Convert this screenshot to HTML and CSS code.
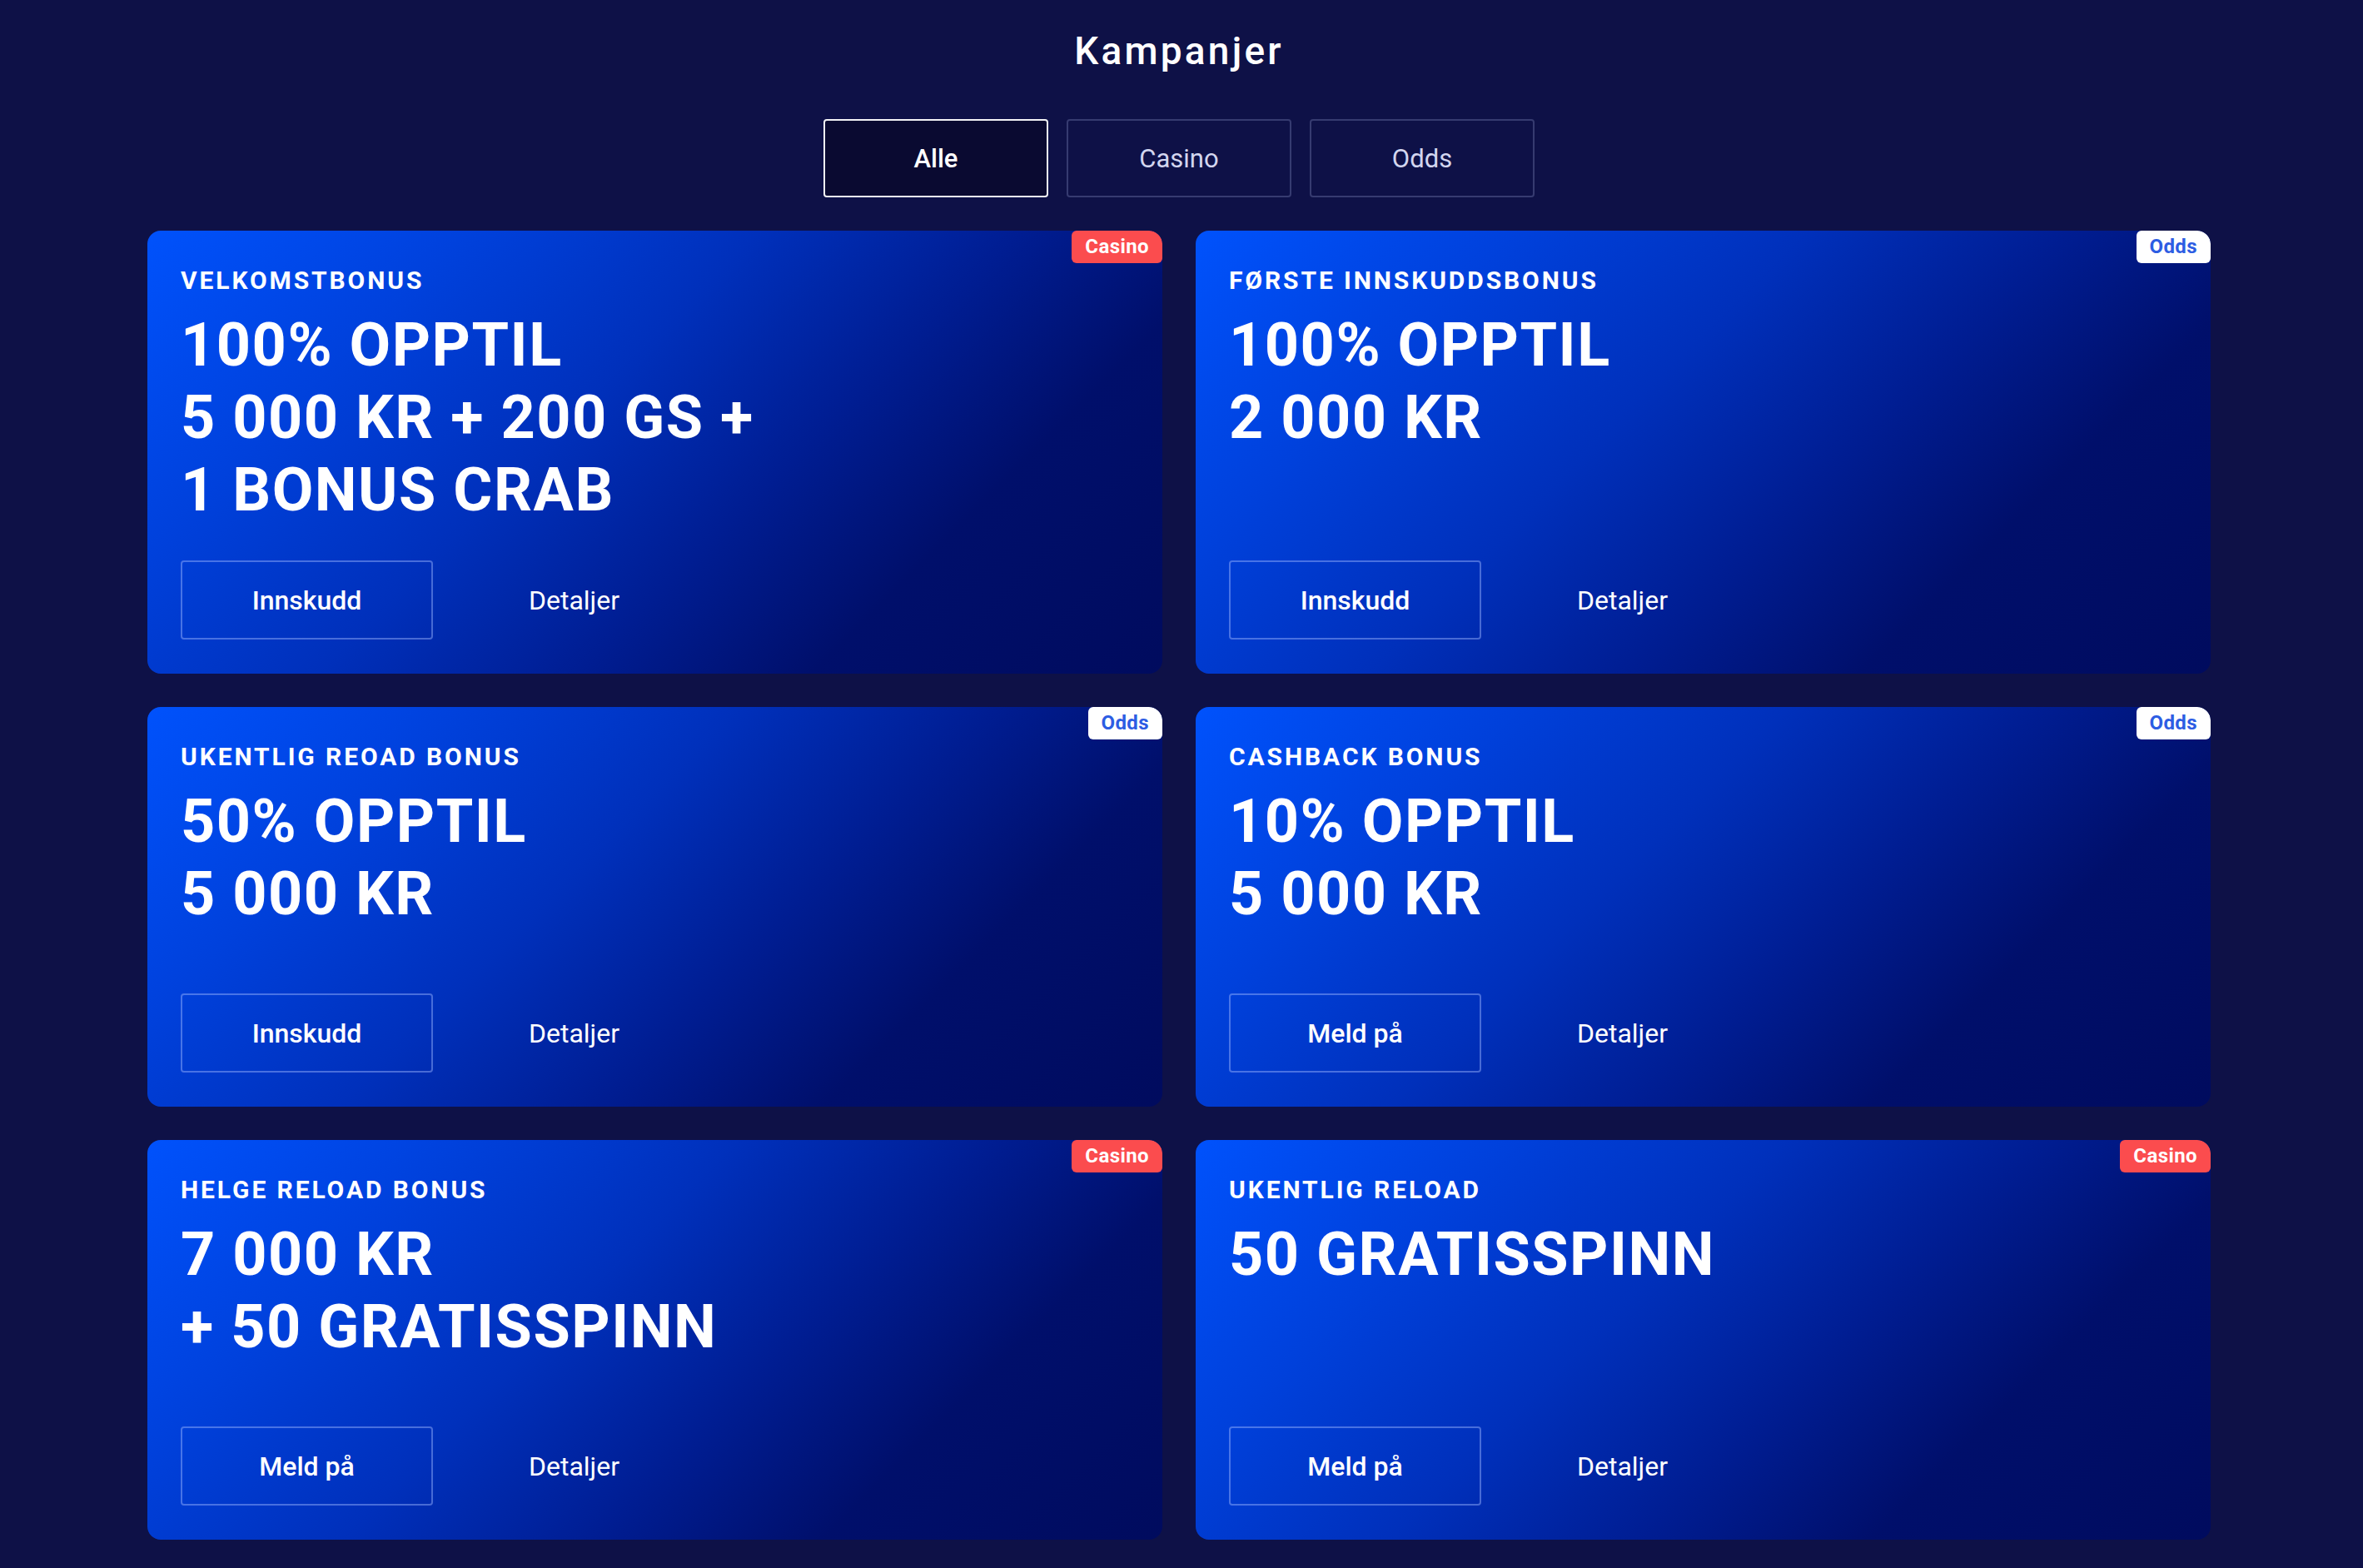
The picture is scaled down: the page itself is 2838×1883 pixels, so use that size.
FILE: index.html
```html
<!DOCTYPE html>
<html lang="no">
<head>
<meta charset="utf-8">
<title>Kampanjer</title>
<link rel="stylesheet" href="styles.css">
</head>
<body>
<main class="page">
  <h1 class="page-title">Kampanjer</h1>

  <nav class="filter-tabs">
    <button class="tab is-active">Alle</button>
    <button class="tab">Casino</button>
    <button class="tab">Odds</button>
  </nav>

  <section class="promo-grid">
    <article class="promo-card">
      <span class="promo-badge badge-casino">Casino</span>
      <p class="promo-label">VELKOMSTBONUS</p>
      <h2 class="promo-headline">100% OPPTIL<br>5 000 KR + 200 GS +<br>1 BONUS CRAB</h2>
      <div class="promo-actions">
        <a class="btn btn-outline" href="#">Innskudd</a>
        <a class="btn btn-plain" href="#">Detaljer</a>
      </div>
    </article>

    <article class="promo-card">
      <span class="promo-badge badge-odds">Odds</span>
      <p class="promo-label">FØRSTE INNSKUDDSBONUS</p>
      <h2 class="promo-headline">100% OPPTIL<br>2 000 KR</h2>
      <div class="promo-actions">
        <a class="btn btn-outline" href="#">Innskudd</a>
        <a class="btn btn-plain" href="#">Detaljer</a>
      </div>
    </article>

    <article class="promo-card">
      <span class="promo-badge badge-odds">Odds</span>
      <p class="promo-label">UKENTLIG REOAD BONUS</p>
      <h2 class="promo-headline">50% OPPTIL<br>5 000 KR</h2>
      <div class="promo-actions">
        <a class="btn btn-outline" href="#">Innskudd</a>
        <a class="btn btn-plain" href="#">Detaljer</a>
      </div>
    </article>

    <article class="promo-card">
      <span class="promo-badge badge-odds">Odds</span>
      <p class="promo-label">CASHBACK BONUS</p>
      <h2 class="promo-headline">10% OPPTIL<br>5 000 KR</h2>
      <div class="promo-actions">
        <a class="btn btn-outline" href="#">Meld på</a>
        <a class="btn btn-plain" href="#">Detaljer</a>
      </div>
    </article>

    <article class="promo-card">
      <span class="promo-badge badge-casino">Casino</span>
      <p class="promo-label">HELGE RELOAD BONUS</p>
      <h2 class="promo-headline">7 000 KR<br>+ 50 GRATISSPINN</h2>
      <div class="promo-actions">
        <a class="btn btn-outline" href="#">Meld på</a>
        <a class="btn btn-plain" href="#">Detaljer</a>
      </div>
    </article>

    <article class="promo-card">
      <span class="promo-badge badge-casino">Casino</span>
      <p class="promo-label">UKENTLIG RELOAD</p>
      <h2 class="promo-headline">50 GRATISSPINN</h2>
      <div class="promo-actions">
        <a class="btn btn-outline" href="#">Meld på</a>
        <a class="btn btn-plain" href="#">Detaljer</a>
      </div>
    </article>
  </section>
</main>
</body>
</html>
```

FILE: styles.css
```css
* {
  box-sizing: border-box;
}

html,
body {
  margin: 0;
  padding: 0;
  background: #0e1147;
}

body {
  font-family: Roboto, "Noto Sans", "Liberation Sans", sans-serif;
  color: #ffffff;
}

.page {
  width: 2478px;
  margin-left: 177px;
  padding-top: 34px;
  display: flex;
  flex-direction: column;
  align-items: center;
}

/* heading */
.page-title {
  margin: 0;
  font-size: 46px;
  line-height: 55px;
  font-weight: 500;
  letter-spacing: 3.2px;
  color: #ffffff;
}

/* filter tabs */
.filter-tabs {
  display: flex;
  gap: 22px;
  margin-top: 54px;
}

.tab {
  width: 270px;
  height: 94px;
  border: 2px solid #363b70;
  border-radius: 4px;
  background: transparent;
  color: #d3d6ef;
  font-family: inherit;
  font-size: 31px;
  font-weight: 400;
  cursor: pointer;
}

.tab.is-active {
  background: #0a0a31;
  border-color: #f2f2f5;
  color: #ffffff;
  font-weight: 500;
}

/* promotion cards */
.promo-grid {
  width: 100%;
  margin-top: 40px;
  display: grid;
  grid-template-columns: 1fr 1fr;
  gap: 40px;
}

.promo-card {
  position: relative;
  min-height: 480px;
  padding: 42px 40px 41px 40px;
  border-radius: 16px;
  background: linear-gradient(135deg, #0052fc 0%, #0041dc 22%, #0030bb 42%, #001d92 60%, #000f6b 76%, #000b5e 100%);
  display: flex;
  flex-direction: column;
  overflow: hidden;
}

.promo-badge {
  position: absolute;
  top: 0;
  right: 0;
  height: 39px;
  padding: 0 16px;
  line-height: 39px;
  font-size: 24px;
  font-weight: 700;
  letter-spacing: 0.4px;
  border-radius: 6px 16px 6px 6px;
}

.badge-casino {
  background: #fb4c4e;
  color: #ffffff;
}

.badge-odds {
  background: #ffffff;
  color: #2d5de3;
}

.promo-label {
  margin: 0;
  font-size: 30px;
  line-height: 36px;
  font-weight: 700;
  letter-spacing: 2.9px;
}

.promo-headline {
  margin: 16px 0 41px;
  font-size: 72px;
  line-height: 87px;
  font-weight: 700;
  letter-spacing: 1.5px;
}

.promo-actions {
  margin-top: auto;
  display: flex;
  gap: 18px;
}

.btn {
  width: 303px;
  height: 95px;
  display: flex;
  align-items: center;
  justify-content: center;
  border-radius: 4px;
  font-size: 32px;
  color: #ffffff;
  text-decoration: none;
}

.btn-outline {
  border: 2px solid rgba(160, 185, 255, 0.45);
  font-weight: 500;
}

.btn-plain {
  border: 2px solid transparent;
  font-weight: 400;
}
```
